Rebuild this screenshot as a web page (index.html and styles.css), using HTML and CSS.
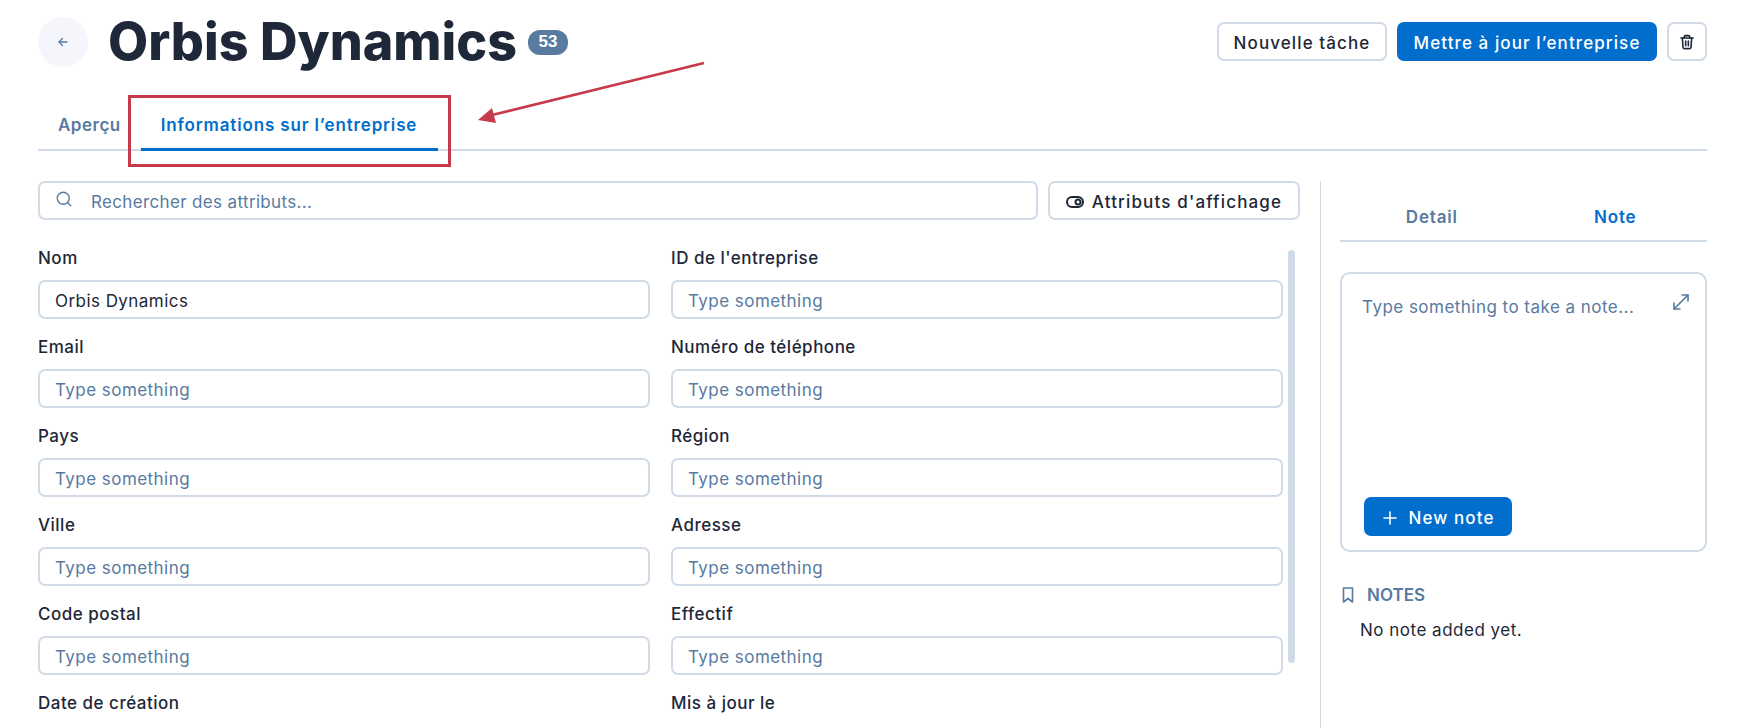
FILE: index.html
```html
<!DOCTYPE html>
<html lang="fr">
<head>
<meta charset="utf-8">
<title>Orbis Dynamics</title>
<link rel="stylesheet" href="styles.css">
</head>
<body>
<div class="page">
  <header class="header">
    <div class="title-group">
      <button class="back" aria-label="Retour">
        <svg width="12" height="12" viewBox="0 0 24 24" fill="none" stroke="currentColor" stroke-width="2.6" stroke-linecap="round" stroke-linejoin="round"><path d="M20 12H4"/><path d="M11 5l-7 7 7 7"/></svg>
      </button>
      <h1 class="title">Orbis Dynamics</h1>
      <span class="badge">53</span>
    </div>
    <div class="actions">
      <button class="btn btn-outline">Nouvelle tâche</button>
      <button class="btn btn-primary">Mettre à jour l’entreprise</button>
      <button class="btn btn-icon" aria-label="Supprimer">
        <svg width="16" height="16" viewBox="0 0 24 24" fill="none" stroke="currentColor" stroke-width="2.4" stroke-linecap="round" stroke-linejoin="round"><path d="M3 6h18"/><path d="M8 6V4a1.5 1.5 0 0 1 1.5-1.5h5A1.5 1.5 0 0 1 16 4v2"/><path d="M5 6l1 14a2 2 0 0 0 2 2h8a2 2 0 0 0 2-2l1-14"/><path d="M10 10.500v7"/><path d="M14 10.500v7"/></svg>
      </button>
    </div>
  </header>

  <nav class="tabs">
    <span class="tab">Aperçu</span>
    <span class="tab tab-active">Informations sur l’entreprise</span>
  </nav>

  <main class="main">
    <section class="left">
      <div class="toolbar">
        <label class="search">
          <svg width="18" height="18" viewBox="0 0 24 24" fill="none" stroke="currentColor" stroke-width="1.8" stroke-linecap="round"><circle cx="11" cy="11" r="8"/><path d="M21 21l-4.300-4.300"/></svg>
          <input class="search-input" placeholder="Rechercher des attributs...">
        </label>
        <button class="btn btn-outline btn-attr">
          <svg width="18" height="12" viewBox="0 0 18 12" fill="none" stroke="currentColor" stroke-width="2"><rect x="1" y="1" width="16" height="10" rx="5"/><circle cx="12" cy="6" r="2.500"/></svg>
          Attributs d'affichage
        </button>
      </div>
      <div class="fields-wrap">
        <div class="fields">
          <div class="field"><label class="label">Nom</label><input class="input" value="Orbis Dynamics"></div>
          <div class="field"><label class="label">ID de l'entreprise</label><input class="input" placeholder="Type something"></div>
          <div class="field"><label class="label">Email</label><input class="input" placeholder="Type something"></div>
          <div class="field"><label class="label">Numéro de téléphone</label><input class="input" placeholder="Type something"></div>
          <div class="field"><label class="label">Pays</label><input class="input" placeholder="Type something"></div>
          <div class="field"><label class="label">Région</label><input class="input" placeholder="Type something"></div>
          <div class="field"><label class="label">Ville</label><input class="input" placeholder="Type something"></div>
          <div class="field"><label class="label">Adresse</label><input class="input" placeholder="Type something"></div>
          <div class="field"><label class="label">Code postal</label><input class="input" placeholder="Type something"></div>
          <div class="field"><label class="label">Effectif</label><input class="input" placeholder="Type something"></div>
          <div class="field"><label class="label">Date de création</label><input class="input" placeholder="Type something"></div>
          <div class="field"><label class="label">Mis à jour le</label><input class="input" placeholder="Type something"></div>
        </div>
        <div class="scrollbar"></div>
      </div>
    </section>

    <aside class="right">
      <div class="side-tabs">
        <span class="side-tab">Detail</span>
        <span class="side-tab side-tab-active">Note</span>
      </div>
      <div class="note-card">
        <div class="note-top">
          <span class="note-placeholder">Type something to take a note...</span>
          <svg class="expand" width="18" height="18" viewBox="0 0 18 18" fill="none" stroke="currentColor" stroke-width="1.6" stroke-linecap="round" stroke-linejoin="round"><path d="M2 16L16 2"/><path d="M10 2h6v6"/><path d="M2 10v6h6"/></svg>
        </div>
        <button class="btn btn-primary btn-new">
          <svg width="14" height="14" viewBox="0 0 14 14" fill="none" stroke="currentColor" stroke-width="1.6" stroke-linecap="round"><path d="M7 1v12"/><path d="M1 7h12"/></svg>
          New note
        </button>
      </div>
      <div class="notes-head">
        <svg width="12" height="16" viewBox="0 0 12 16" fill="none" stroke="currentColor" stroke-width="1.6" stroke-linejoin="round"><path d="M1.500 1h9v14L6 11.500 1.500 15z"/></svg>
        <span>NOTES</span>
      </div>
      <p class="notes-empty">No note added yet.</p>
    </aside>
  </main>

  <div class="highlight"></div>
  <svg class="arrow" width="240" height="70" viewBox="0 0 240 70" fill="none"><path d="M230 3L14 56" stroke="#c73a4b" stroke-width="2.500"/><path d="M4 60L18 48 22 63z" fill="#c73a4b"/></svg>
</div>
</body>
</html>
```

FILE: styles.css
```css
* { box-sizing: border-box; }
html, body { margin: 0; height: 100%; background: #fff; }
body {
  font-family: "Inter", "Liberation Sans", sans-serif;
  font-size: 17px;
  color: #1d2738;
  overflow: hidden;
}
button, input { font: inherit; }
.page {
  position: relative;
  height: 728px;
  padding: 17px 44px 0 38px;
  overflow: hidden;
}
.header { display: flex; justify-content: space-between; align-items: center; height: 50px; }
.title-group { display: flex; align-items: center; }
.back {
  width: 50px; height: 50px; border: 0; border-radius: 50%;
  background: #f4f6fb; color: #55789f;
  display: flex; align-items: center; justify-content: center;
  padding: 0; margin-right: 20px;
}
.title {
  margin: 0; font-size: 52px; line-height: 50px; font-weight: 800;
  letter-spacing: 0; color: #1f2838; width: 408px; white-space: nowrap;
}
.badge {
  margin-left: 12px; width: 40px; height: 25px; border-radius: 12px;
  background: #597ba0; color: #fff; font-size: 17px; font-weight: 700;
  display: flex; align-items: center; justify-content: center;
  font-family: "Liberation Sans", sans-serif;
}
.actions { display: flex; gap: 10px; align-items: center; margin-top: -1px; }
.btn {
  height: 39px; border-radius: 7px; font-weight: 500; font-size: 17px;
  display: inline-flex; align-items: center; justify-content: center;
  white-space: nowrap; padding: 2px 0 0; letter-spacing: 1.1px;
}
.btn-outline { background: #fff; border: 2px solid #d0dbe7; color: #1d2738; width: 170px; }
.btn-primary { background: #016ecd; border: 0; color: #fff; width: 260px; }
.btn-icon { background: #fff; border: 2px solid #d0dbe7; color: #1d2738; width: 40px; padding: 0; }

.tabs {
  display: flex; height: 55px; margin-top: 29px;
  border-bottom: 2px solid #d0dbe7;
}
.tab {
  height: 55px; display: flex; align-items: center;
  font-weight: 600; font-size: 17px; color: #587a9f; padding: 3px 20px 0;
  letter-spacing: 0.5px;
}
.tab:first-child { padding-left: 20px; padding-right: 20px; }
.tab-active {
  color: #016ecd; border-bottom: 3px solid #016ecd; width: 297px;
  padding-top: 6px; letter-spacing: 0.85px; white-space: nowrap;
}

.main { display: flex; margin-top: 30px; height: 547px; }
.left { width: 1283px; padding-right: 20px; border-right: 1px solid #d0dbe7; }
.toolbar { display: flex; gap: 10px; }
.search {
  flex: 1; height: 39px; border: 2px solid #d0dbe7; border-radius: 7px;
  display: flex; align-items: center; padding-left: 15px; gap: 18px; color: #587a9f;
}
.search svg { margin-top: -4px; flex: none; }
.search-input { flex: 1; border: 0; outline: 0; background: transparent; padding: 2px 0 0; letter-spacing: 0.35px; }
.btn-attr { width: 252px; height: 39px; gap: 8px; letter-spacing: 1.15px; }
::placeholder { color: #587a9f; opacity: 1; }

.fields-wrap { display: flex; gap: 5px; margin-top: 27px; height: 473px; overflow: hidden; }
.fields { width: 1245px; display: grid; grid-template-columns: 612px 612px; column-gap: 21px; row-gap: 17px; align-content: start; }
.label { display: block; height: 22px; line-height: 22px; font-weight: 500; font-size: 17px; letter-spacing: 0.5px; }
.input {
  display: block; width: 100%; height: 39px; margin-top: 11px;
  border: 2px solid #d0dbe7; border-radius: 7px; background: #fff;
  padding: 2px 15px 0; color: #1d2738; outline: 0; letter-spacing: 0.45px;
}
.scrollbar { width: 7px; height: 413px; margin-top: 3px; border-radius: 4px; background: #d0dbe7; flex: none; }

.right { width: 386px; padding-left: 19px; }
.side-tabs { display: flex; height: 61px; border-bottom: 2px solid #d0dbe7; }
.side-tab {
  flex: 1; display: flex; align-items: center; justify-content: center;
  font-weight: 600; color: #587a9f; padding-top: 13px; letter-spacing: 0.8px;
}
.side-tab-active { color: #016ecd; }
.note-card {
  height: 280px; margin-top: 30px; border: 2px solid #d0dbe7; border-radius: 10px;
  padding: 0 19px 0 22px; display: flex; flex-direction: column; justify-content: space-between;
}
.note-top { display: flex; justify-content: space-between; padding-top: 22px; margin-left: -2px; }
.note-placeholder { color: #587a9f; line-height: 22px; letter-spacing: 0.47px; }
.expand { color: #587a9f; margin-right: -4px; margin-top: -3px; }
.btn-new { width: 148px; height: 39px; gap: 11px; margin-bottom: 14px; padding-left: 2px; }
.notes-head {
  display: flex; align-items: center; gap: 13px; margin-top: 33px;
  font-weight: 600; color: #587a9f; padding-left: 2px; height: 20px;
}
.notes-empty { margin: 14px 0 0 20px; line-height: 22px; letter-spacing: 0.5px; }

.highlight {
  position: absolute; left: 128px; top: 95px; width: 323px; height: 72px;
  border: 3px solid #c73a4b;
}
.arrow { position: absolute; left: 474px; top: 60px; }
```
